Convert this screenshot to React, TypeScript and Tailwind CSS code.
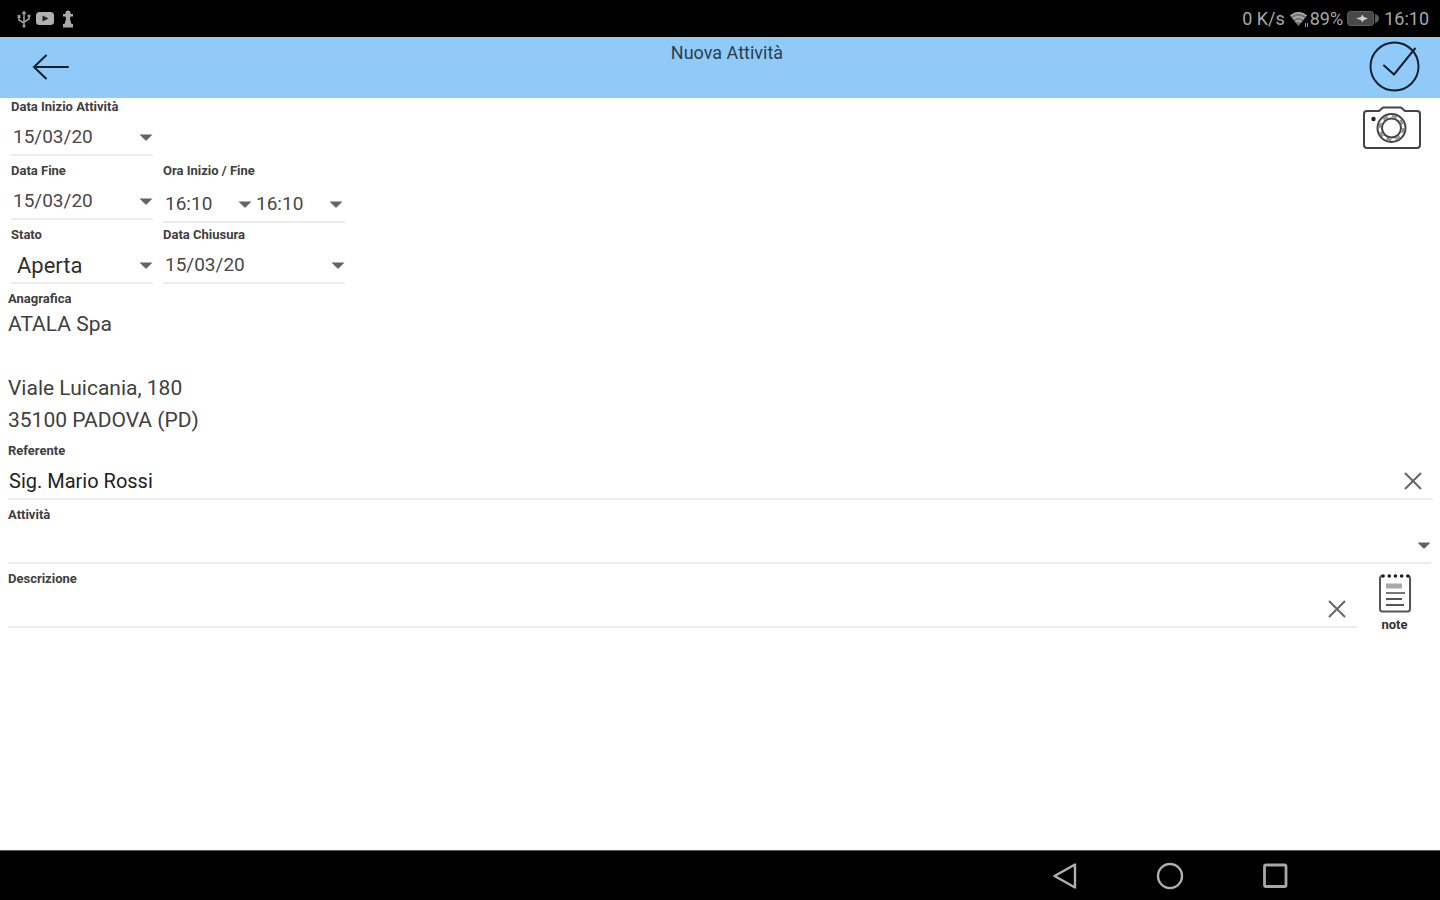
import { useState } from "react";
import type { ReactNode } from "react";

function Caret({ className = "" }: { className?: string }) {
  return (
    <svg
      className={`pointer-events-none absolute top-[18px] h-[7px] w-[14px] ${className}`}
      viewBox="0 0 14 7"
      aria-hidden="true"
    >
      <path d="M0.5 0.5h13L8 6Q7 7 6 6Z" fill="#636363" />
    </svg>
  );
}

function Label({ htmlFor, children, className = "" }: { htmlFor: string; children: ReactNode; className?: string }) {
  return (
    <label htmlFor={htmlFor} className={`block h-[18px] text-[13px] leading-[18px] font-bold text-[#404040] ${className}`}>
      {children}
    </label>
  );
}

type SelectProps = {
  id: string;
  options: string[];
  ariaLabel?: string;
  className?: string;
  caret?: string;
};

function Select({ id, options, ariaLabel, className = "pl-[2px] text-[19px] text-[#484848]", caret = "right-0" }: SelectProps) {
  return (
    <div className="relative min-w-0 flex-1">
      <select
        id={id}
        aria-label={ariaLabel}
        defaultValue={options[0]}
        className={`h-[38px] w-full appearance-none bg-transparent pt-[5px] outline-none ${className}`}
      >
        {options.map((option) => (
          <option key={option}>{option}</option>
        ))}
      </select>
      <Caret className={caret} />
    </div>
  );
}

function Line({ children }: { children: ReactNode }) {
  return <div className="flex h-10 items-center border-b-2 border-[#ebebeb]">{children}</div>;
}

function ClearButton({ label, onClick, className }: { label: string; onClick: () => void; className: string }) {
  return (
    <button type="button" aria-label={label} onClick={onClick} className={`shrink-0 pt-1 ${className}`}>
      <svg className="size-[18px]" viewBox="0 0 18 18" fill="none" stroke="#666" strokeWidth="2" aria-hidden="true">
        <path d="M1 1l16 16M17 1L1 17" />
      </svg>
    </button>
  );
}

function StatusBar() {
  return (
    <div className="flex h-[37px] items-center justify-between bg-black pr-[11px] pl-4 text-[18px] text-[#a8a8a8]">
      <div className="flex items-center gap-2">
        <svg className="h-[18px] w-4" viewBox="0 0 16 18" fill="none" stroke="#999" strokeWidth="1.6" aria-hidden="true">
          <path d="M8 2v15M8 13L3 10V6M8 12l5-3V5" />
          <path d="M5.5 4L8 0.5 10.5 4Z" fill="#999" stroke="none" />
          <rect x="1.5" y="5" width="3" height="3" fill="#999" stroke="none" />
          <circle cx="13" cy="6" r="1.6" fill="#999" stroke="none" />
          <circle cx="8" cy="16" r="1.6" fill="#999" stroke="none" />
        </svg>
        <svg className="-ml-1 h-[13px] w-[18px]" viewBox="0 0 18 13" aria-hidden="true">
          <rect width="18" height="13" rx="3.5" fill="#b0b0b0" />
          <path d="M6.5 3.5l6 3-6 3Z" fill="#222" />
        </svg>
        <svg className="h-[18px] w-3" viewBox="0 0 12 18" fill="#a8a8a8" aria-hidden="true">
          <circle cx="6" cy="3.2" r="2.6" />
          <path d="M1 4h10v2.5H8.5L8 9l1.5 5H11v3.5H1V14h1.500L4 9 3.500 6.500H1Z" />
        </svg>
      </div>
      <div className="flex items-center">
        <span>0 K/s</span>
        <svg className="ml-1 h-4 w-[21px]" viewBox="0 0 20 16" aria-hidden="true">
          <path d="M9 15L0.500 4.500Q9-2 17.500 4.500Z" fill="#777" />
          <path d="M1 5Q9-1.500 17 5M3.500 8Q9 3.500 14.500 8M6 11Q9 8.500 12 11" fill="none" stroke="#b0b0b0" strokeWidth="1.400" />
          <path d="M18 12v4M16 12v4" stroke="#999" strokeWidth="1" />
        </svg>
        <span>89%</span>
        <svg className="ml-1 h-[15px] w-[33px]" viewBox="0 0 33 15" aria-hidden="true">
          <rect x="0.500" y="0.500" width="26" height="14" rx="3" fill="#484848" stroke="#606060" />
          <path d="M28 3q4 1 4 4.500T28 12Z" fill="#606060" />
          <path d="M9 7.500l5-1.500 1-2.500 2 2.500 4 1.500-4 1.500-2 2.500-1-2.500Z" fill="#d0d0d0" />
        </svg>
        <span className="ml-1">16:10</span>
      </div>
    </div>
  );
}

function Header() {
  return (
    <header className="grid h-[61px] grid-cols-[1fr_auto_1fr] bg-[#90caf9]">
      <button type="button" aria-label="Indietro" className="ml-8 flex items-center self-stretch justify-self-start pb-[2px]">
        <svg className="h-[26px] w-[38px]" viewBox="0 0 38 26" fill="none" stroke="#10202c" strokeWidth="2" strokeLinecap="round" aria-hidden="true">
          <path d="M2 13h34M14 1.500L2 13l12 11.500" />
        </svg>
      </button>
      <h1 className="pt-1 pl-[14px] text-[18px] leading-6 text-[#2c3e4d]">Nuova Attività</h1>
      <button type="button" aria-label="Conferma" className="mr-5 flex items-center justify-self-end pb-[2px]">
        <svg className="size-[51px]" viewBox="0 0 51 51" fill="none" stroke="#10202c" strokeWidth="2" strokeLinecap="round" aria-hidden="true">
          <circle cx="25.500" cy="25.500" r="24" />
          <path d="M15 24.500l10 9L46 7.500" />
        </svg>
      </button>
    </header>
  );
}

function CameraIcon() {
  return (
    <svg className="h-[44px] w-[58px]" viewBox="0 0 58 44" fill="none" stroke="#444" strokeWidth="2" aria-hidden="true">
      <path d="M4 5h12l4-3.500h18L42 5h12q3 0 3 3v31q0 3-3 3H4q-3 0-3-3V8q0-3 3-3Z" />
      <circle cx="28.500" cy="22" r="14" />
      <circle cx="28.500" cy="22" r="9.500" />
      <circle cx="28.500" cy="22" r="11.800" strokeDasharray="5 4.270" stroke="#888" />
      <circle cx="10.500" cy="13" r="2.200" fill="#222" stroke="none" />
    </svg>
  );
}

function NoteIcon() {
  return (
    <svg className="h-10 w-[34px]" viewBox="0 0 34 40" fill="none" stroke="#555" strokeWidth="2" aria-hidden="true">
      <path d="M4 3Q2 3 2 6v30q0 2.500 2.500 2.500h25Q32 38.500 32 36V6q0-3-2-3" />
      <path d="M5 3h25" stroke="#222" strokeWidth="3.600" strokeLinecap="round" strokeDasharray="0.100 6.100" />
      <path d="M8 13h16" stroke="#aaa" strokeWidth="5" />
      <path d="M8 20h19" stroke="#777" />
      <path d="M8 26h16M8 32h18" />
    </svg>
  );
}

function NavigationBar() {
  return (
    <nav className="flex h-[50px] items-center justify-end gap-[77px] border-t border-[#555] bg-black pr-[151px]">
      <button type="button" aria-label="Indietro di sistema">
        <svg className="size-7" viewBox="0 0 28 28" fill="none" stroke="#b0b0b0" strokeWidth="2.400" strokeLinejoin="round" aria-hidden="true">
          <path d="M24 2.500v23L3.500 14Z" />
        </svg>
      </button>
      <button type="button" aria-label="Home">
        <svg className="size-7" viewBox="0 0 28 28" fill="none" stroke="#b0b0b0" strokeWidth="2.400" aria-hidden="true">
          <circle cx="14" cy="14" r="12" />
        </svg>
      </button>
      <button type="button" aria-label="Recenti">
        <svg className="size-7" viewBox="0 0 28 28" fill="none" stroke="#a8a8a8" strokeWidth="2.800" aria-hidden="true">
          <rect x="3.500" y="3" width="21.500" height="21.500" rx="1.500" />
        </svg>
      </button>
    </nav>
  );
}

export default function App() {
  const [contact, setContact] = useState("Sig. Mario Rossi");
  const [description, setDescription] = useState("");

  return (
    <div className="flex min-h-screen flex-col bg-white font-['Roboto',sans-serif]">
      <StatusBar />
      <Header />
      <main className="flex-1">
        <div className="flex items-start justify-between pr-[19px] pl-[11px]">
          <div className="grid grid-cols-[142px_182px] gap-x-[10px]">
            <div className="col-span-2 h-16">
              <Label htmlFor="start-date">Data Inizio Attività</Label>
              <div className="w-[142px]">
                <Line>
                  <Select id="start-date" options={["15/03/20"]} />
                </Line>
              </div>
            </div>
            <div className="h-16">
              <Label htmlFor="end-date">Data Fine</Label>
              <Line>
                <Select id="end-date" options={["15/03/20"]} />
              </Line>
            </div>
            <div className="h-16">
              <Label htmlFor="start-time">Ora Inizio / Fine</Label>
              <div className="pt-[3px]">
                <Line>
                  <Select id="start-time" options={["16:10"]} caret="right-[2px]" />
                  <Select id="end-time" options={["16:10"]} ariaLabel="Ora Fine" caret="right-[2px]" />
                </Line>
              </div>
            </div>
            <div className="h-16">
              <Label htmlFor="status">Stato</Label>
              <Line>
                <Select id="status" options={["Aperta", "Chiusa"]} className="pl-[6px] text-[22px] text-[#303030]" />
              </Line>
            </div>
            <div className="h-16">
              <Label htmlFor="close-date">Data Chiusura</Label>
              <Line>
                <Select id="close-date" options={["15/03/20"]} />
              </Line>
            </div>
          </div>
          <button type="button" aria-label="Fotocamera" className="pt-2">
            <CameraIcon />
          </button>
        </div>

        <section className="h-[152px] px-2 text-[21px] leading-8 text-[#404040]">
          <h2 className="h-[18px] text-[13px] leading-[18px] font-bold text-[#404040]">Anagrafica</h2>
          <p>ATALA Spa</p>
          <p className="pt-8">Viale Luicania, 180</p>
          <p>35100 PADOVA (PD)</p>
        </section>

        <div className="h-16 pr-[7px] pl-2">
          <Label htmlFor="contact">Referente</Label>
          <Line>
            <input
              id="contact"
              value={contact}
              onChange={(event) => setContact(event.target.value)}
              className="h-full min-w-0 flex-1 bg-transparent pt-[3px] pl-px text-[20px] text-[#222] outline-none"
            />
            <ClearButton label="Cancella referente" onClick={() => setContact("")} className="pr-[11px]" />
          </Line>
        </div>

        <div className="h-16 pr-[9px] pl-2">
          <Label htmlFor="activity">Attività</Label>
          <Line>
            <Select id="activity" options={[""]} />
          </Line>
        </div>

        <div className="flex items-start pl-2">
          <div className="min-w-0 flex-1">
            <Label htmlFor="description">Descrizione</Label>
            <Line>
              <input
                id="description"
                value={description}
                onChange={(event) => setDescription(event.target.value)}
                className="h-full min-w-0 flex-1 bg-transparent pt-[3px] pl-px text-[20px] text-[#222] outline-none"
              />
              <ClearButton label="Cancella descrizione" onClick={() => setDescription("")} className="pr-[11px]" />
            </Line>
          </div>
          <button type="button" className="flex w-[83px] flex-col items-center pt-[3px] pr-2 text-[13px] leading-6 font-bold text-[#333]">
            <NoteIcon />
            note
          </button>
        </div>
      </main>
      <NavigationBar />
    </div>
  );
}
